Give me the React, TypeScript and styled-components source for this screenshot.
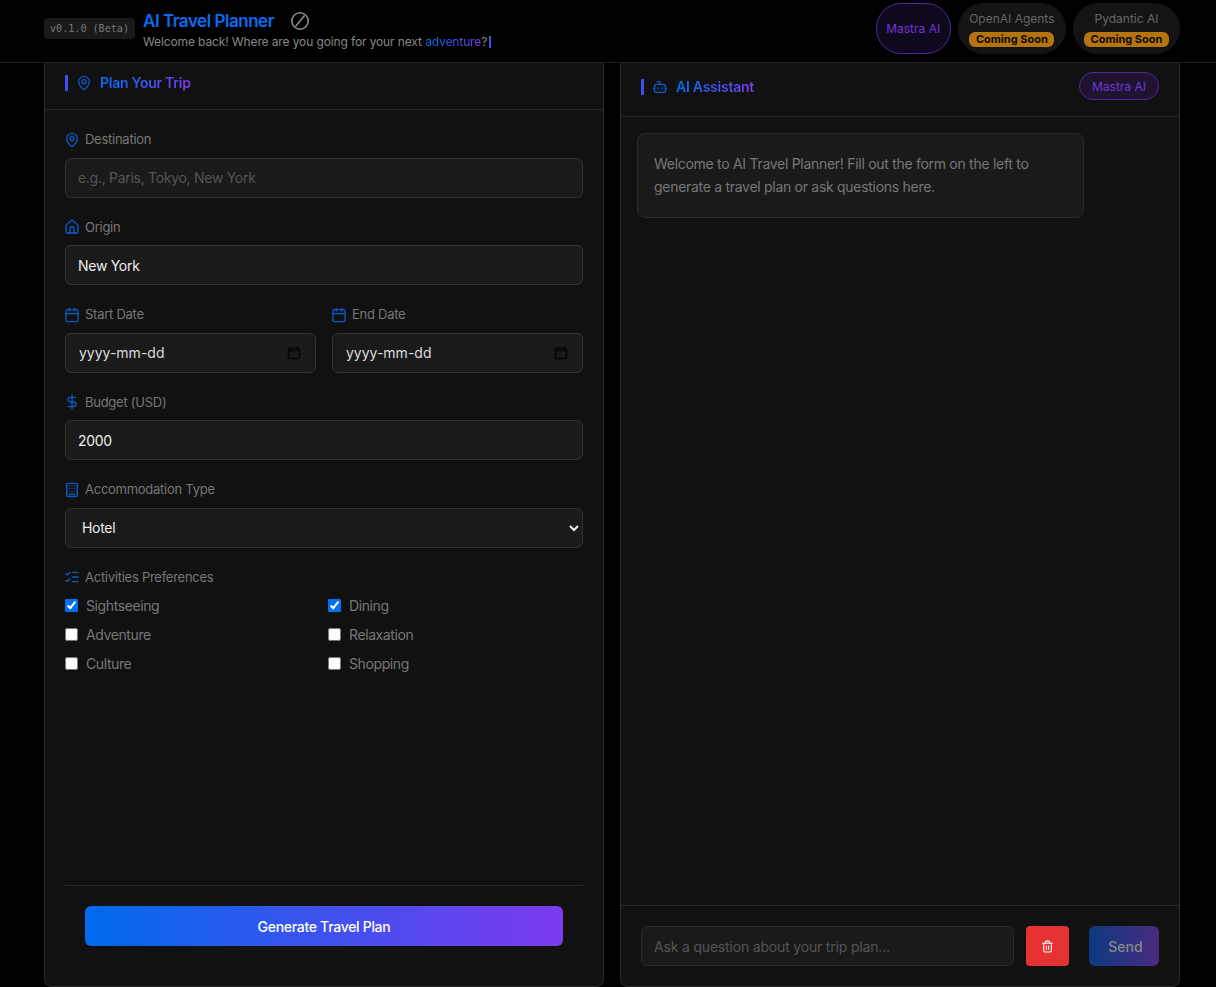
import React from 'react';
import styled, { createGlobalStyle } from 'styled-components';
import { MapPin, House, Calendar, DollarSign, Building, ListChecks, Bot, Trash2 } from 'lucide-react';

const GlobalStyle = createGlobalStyle`
  * { box-sizing: border-box; }
  html { color-scheme: dark; }
  body {
    margin: 0;
    background: #000;
    color: #ededed;
    font-family: Inter, "Liberation Sans", sans-serif;
  }
`;

const Page = styled.div`
  height: 987px;
  display: flex;
  flex-direction: column;
  overflow: hidden;
`;

const Header = styled.header`
  height: 63px;
  flex: none;
  display: flex;
  align-items: center;
  justify-content: space-between;
  padding: 0 36px 5px 44px;
  border-bottom: 1px solid #222;
`;

const Brand = styled.div`
  display: flex;
  align-items: center;
  gap: 8px;
`;

const Version = styled.span`
  height: 21px;
  padding: 0 6px;
  display: flex;
  align-items: center;
  border-radius: 4px;
  background: #1a1a1a;
  color: #777;
  font-family: "DejaVu Sans Mono", "Liberation Mono", monospace;
  font-size: 10.1px;
`;

const TitleRow = styled.div`
  display: flex;
  align-items: center;
  gap: 16px;
  height: 24px;
  margin-top: 2px;
`;

const Title = styled.h1`
  margin: 0;
  font-size: 17px;
  line-height: 24px;
  font-weight: 600;
  letter-spacing: -0.47px;
  color: #0a6cf0;
`;

const Subtitle = styled.p`
  margin: 0;
  display: flex;
  align-items: center;
  font-size: 12px;
  line-height: 18px;
  letter-spacing: -0.12px;
  color: #888;
`;

const GradientWord = styled.span`
  margin-left: 3.4px;
  background: linear-gradient(90deg, #0070f3, #7c3aed);
  -webkit-background-clip: text;
  background-clip: text;
  color: transparent;
`;

const Cursor = styled.span`
  width: 2px;
  height: 12px;
  margin-left: 2px;
  background: #3d4ff0;
`;

const Frameworks = styled.div`
  display: flex;
  gap: 7.5px;
`;

const Framework = styled.div<{ $active?: boolean }>`
  height: 51px;
  padding: 0 ${(p) => (p.$active ? '9.5px' : '10px')};
  display: flex;
  flex-direction: column;
  align-items: center;
  justify-content: center;
  gap: 6px;
  border-radius: 25px;
  border: 1px solid ${(p) => (p.$active ? '#4c2a9a' : '#141414')};
  background: ${(p) => (p.$active ? '#10081f' : '#141414')};
  color: ${(p) => (p.$active ? '#7035d5' : '#666')};
  font-size: 12px;
  line-height: 15px;
`;

const Soon = styled.span`
  height: 15px;
  width: 85px;
  display: flex;
  align-items: center;
  justify-content: center;
  border-radius: 6px;
  background: #b4740f;
  color: #0c0a05;
  font-size: 11px;
  font-weight: 700;
`;

const Main = styled.main`
  flex: 1;
  min-height: 0;
  display: flex;
  gap: 16px;
  padding: 0 36px 0 44px;
`;

const Panel = styled.section`
  flex: 1;
  display: flex;
  flex-direction: column;
  background: #111;
  border: 1px solid #2a2a2a;
  border-top: 0;
  border-radius: 0 0 8px 8px;
`;

const PanelHead = styled.div<{ $height: number }>`
  height: ${(p) => p.$height}px;
  flex: none;
  display: flex;
  align-items: center;
  justify-content: space-between;
  padding: 0 20px 6px;
  border-bottom: 1px solid #2a2a2a;
`;

const PanelTitle = styled.div`
  display: flex;
  align-items: center;
  color: #0a5cc8;
`;

const AccentBar = styled.span`
  width: 3px;
  height: 16px;
  margin-right: 8px;
  background: #3d4ff0;
`;

const PanelName = styled.h2`
  margin: 0 0 0 8px;
  font-size: 14px;
  line-height: 20px;
  font-weight: 600;
  letter-spacing: -0.25px;
  background: linear-gradient(90deg, #0070f3, #7c3aed);
  -webkit-background-clip: text;
  background-clip: text;
  color: transparent;
`;

const Tag = styled.span`
  height: 28px;
  margin-top: -1px;
  padding: 0 12px;
  display: flex;
  align-items: center;
  border-radius: 14px;
  border: 1px solid #4c2a9a;
  background: #1e1430;
  color: #7035d5;
  font-size: 12px;
`;

const Form = styled.form`
  flex: 1;
  display: flex;
  flex-direction: column;
  padding: 20px 20px 0;
`;

const Field = styled.div`
  margin-bottom: 20px;
`;

const Label = styled.label`
  display: flex;
  align-items: center;
  gap: 5px;
  margin-bottom: 8px;
  font-size: 13px;
  line-height: 19.5px;
  letter-spacing: -0.26px;
  color: #777;
  svg {
    margin-left: -1px;
    color: #0a5cc8;
    flex: none;
  }
`;

const controlStyles = `
  width: 100%;
  height: 40px;
  padding: 0 12px;
  display: block;
  border: 1px solid #333;
  border-radius: 6px;
  background: #1a1a1a;
  color: #ededed;
  font-family: Inter, "Liberation Sans", sans-serif;
  font-size: 14px;
  letter-spacing: -0.29px;
  outline: none;
  &::placeholder { color: #555; }
`;

const Input = styled.input`
  ${controlStyles}
`;

const Select = styled.select`
  ${controlStyles}
`;

const DateRow = styled.div`
  display: grid;
  grid-template-columns: 1fr 1fr;
  column-gap: 16px;
`;

const DateBox = styled.div`
  position: relative;
  svg {
    position: absolute;
    right: 15px;
    top: 13px;
  }
`;

const DateInput = styled(Input)`
  padding-left: 13px;
  letter-spacing: 0;
  color: #ddd;
`;

const Checks = styled.div`
  display: grid;
  grid-template-columns: 1fr 1fr;
  gap: 8px;
`;

const Check = styled.label`
  display: flex;
  align-items: center;
  gap: 8px;
  font-size: 14px;
  line-height: 21px;
  letter-spacing: -0.4px;
  color: #777;
  input {
    width: 13px;
    height: 13px;
    margin: 0;
    accent-color: #0070f3;
    color-scheme: light;
  }
`;

const FormFooter = styled.div`
  margin-top: auto;
  padding: 20px 20px 40px;
  border-top: 1px solid #2a2a2a;
`;

const Generate = styled.button`
  width: 100%;
  height: 40px;
  border: 0;
  border-radius: 6px;
  background: linear-gradient(90deg, #006aef, #7c3aed);
  color: #fff;
  font-family: inherit;
  font-size: 14px;
  font-weight: 500;
  letter-spacing: -0.3px;
`;

const Messages = styled.div`
  flex: 1;
  padding: 16px;
`;

const Bubble = styled.div`
  width: 447px;
  padding: 18px 16px 19px;
  border: 1px solid #2a2a2a;
  border-radius: 8px;
  background: #1a1a1a;
  color: #777;
  font-size: 14px;
  line-height: 23px;
  letter-spacing: -0.29px;
`;

const ChatBar = styled.div`
  display: flex;
  align-items: center;
  padding: 20px;
  border-top: 1px solid #2a2a2a;
`;

const ChatInput = styled.input`
  ${controlStyles}
  flex: 1;
  width: auto;
  min-width: 0;
  border-color: #2a2a2a;
  letter-spacing: -0.18px;
`;

const ClearButton = styled.button`
  width: 43px;
  height: 40px;
  margin-left: 12px;
  display: flex;
  align-items: center;
  justify-content: center;
  border: 0;
  border-radius: 4px;
  background: #e53232;
  color: #fff;
  padding: 0;
`;

const SendButton = styled.button`
  width: 70px;
  height: 40px;
  margin-left: 20px;
  padding: 0 0 0 3px;
  border: 0;
  border-radius: 6px;
  background: linear-gradient(90deg, #0c3a80, #4a2a80);
  color: #888;
  font-family: inherit;
  font-size: 14px;
  font-weight: 500;
`;

const activities = [
  { name: 'Sightseeing', checked: true },
  { name: 'Dining', checked: true },
  { name: 'Adventure', checked: false },
  { name: 'Relaxation', checked: false },
  { name: 'Culture', checked: false },
  { name: 'Shopping', checked: false },
];

function DateControl() {
  return (
    <DateBox>
      <DateInput defaultValue="yyyy-mm-dd" />
      <svg width="14" height="14" viewBox="0 0 14 14" fill="none" stroke="#050505" strokeWidth="1.5">
        <rect x="1.5" y="2.5" width="11" height="10" rx="1" />
        <path d="M1.5 4.5h11M4 1v2M10 1v2" />
      </svg>
    </DateBox>
  );
}

function App() {
  return (
    <Page>
      <GlobalStyle />
      <Header>
        <Brand>
          <Version>v0.1.0 (Beta)</Version>
          <div>
            <TitleRow>
              <Title>AI Travel Planner</Title>
              <svg width="20" height="20" viewBox="0 0 20 20" fill="none" stroke="#8a8a8a" strokeWidth="1.6">
                <circle cx="10" cy="10" r="8.2" />
                <path d="M5.5 15.5 14.5 4.5" />
              </svg>
            </TitleRow>
            <Subtitle>
              Welcome back! Where are you going for your next
              <GradientWord>adventure</GradientWord>?<Cursor />
            </Subtitle>
          </div>
        </Brand>
        <Frameworks>
          <Framework $active>Mastra AI</Framework>
          <Framework>
            OpenAI Agents
            <Soon>Coming Soon</Soon>
          </Framework>
          <Framework>
            Pydantic AI
            <Soon>Coming Soon</Soon>
          </Framework>
        </Frameworks>
      </Header>
      <Main>
        <Panel>
          <PanelHead $height={47}>
            <PanelTitle>
              <AccentBar />
              <MapPin size={16} />
              <PanelName>Plan Your Trip</PanelName>
            </PanelTitle>
          </PanelHead>
          <Form>
            <Field>
              <Label><MapPin size={16} />Destination</Label>
              <Input placeholder="e.g., Paris, Tokyo, New York" />
            </Field>
            <Field>
              <Label><House size={16} />Origin</Label>
              <Input defaultValue="New York" />
            </Field>
            <DateRow>
              <Field>
                <Label><Calendar size={16} />Start Date</Label>
                <DateControl />
              </Field>
              <Field>
                <Label><Calendar size={16} />End Date</Label>
                <DateControl />
              </Field>
            </DateRow>
            <Field>
              <Label><DollarSign size={16} />Budget (USD)</Label>
              <Input type="number" defaultValue="2000" />
            </Field>
            <Field>
              <Label><Building size={16} />Accommodation Type</Label>
              <Select defaultValue="Hotel">
                <option>Hotel</option>
                <option>Hostel</option>
                <option>Apartment</option>
              </Select>
            </Field>
            <Field>
              <Label><ListChecks size={16} />Activities Preferences</Label>
              <Checks>
                {activities.map((a) => (
                  <Check key={a.name}>
                    <input type="checkbox" defaultChecked={a.checked} />
                    {a.name}
                  </Check>
                ))}
              </Checks>
            </Field>
            <FormFooter>
              <Generate type="button">Generate Travel Plan</Generate>
            </FormFooter>
          </Form>
        </Panel>
        <Panel>
          <PanelHead $height={54}>
            <PanelTitle>
              <AccentBar />
              <Bot size={16} />
              <PanelName>AI Assistant</PanelName>
            </PanelTitle>
            <Tag>Mastra AI</Tag>
          </PanelHead>
          <Messages>
            <Bubble>
              Welcome to AI Travel Planner! Fill out the form on the left to generate a travel plan or ask questions here.
            </Bubble>
          </Messages>
          <ChatBar>
            <ChatInput placeholder="Ask a question about your trip plan..." />
            <ClearButton type="button"><Trash2 size={13} /></ClearButton>
            <SendButton type="button">Send</SendButton>
          </ChatBar>
        </Panel>
      </Main>
    </Page>
  );
}

export default App;
